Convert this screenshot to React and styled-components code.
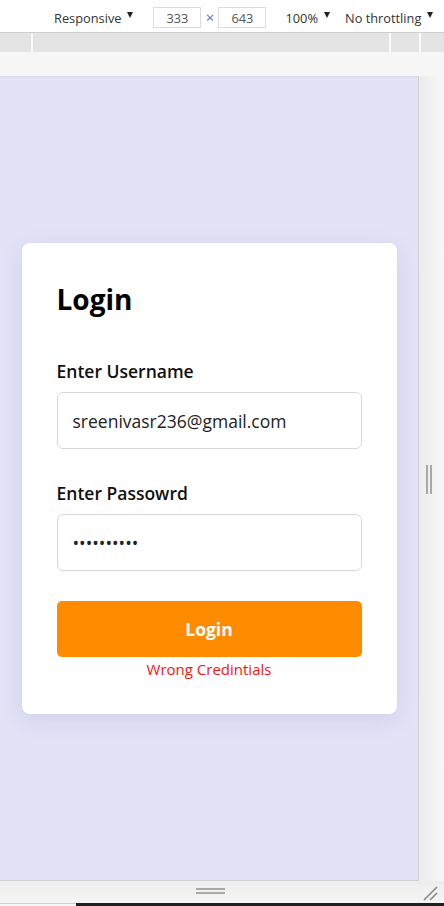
import React from "react";
import styled, { createGlobalStyle } from "styled-components";

const GlobalStyle = createGlobalStyle`
  html, body { margin: 0; padding: 0; background: #f3f3f3; }
  body { font-family: "Open Sans", "Noto Sans", sans-serif; overflow: hidden; }
  * { box-sizing: border-box; }
`;

const Frame = styled.div`
  width: 444px;
  height: 906px;
  display: grid;
  grid-template-rows: 33px 19px 24px 1fr 22px 3px;
  background: #f3f3f3;
`;

const Toolbar = styled.div`
  display: flex;
  align-items: center;
  padding-left: 54px;
  padding-top: 3px;
  background: #ffffff;
  border-bottom: 1px solid #cfcfcf;
  font-size: 12.8px;
  color: #333;
  white-space: nowrap;
`;

const Dropdown = styled.span`
  display: inline-flex;
  align-items: center;
  gap: 6px;
  margin-right: ${(p) => p.$gap || 0}px;
  &::after {
    content: "";
    border-left: 3.5px solid transparent;
    border-right: 3.5px solid transparent;
    border-top: 6px solid #222;
    margin-top: -5px;
  }
`;

const SizeBox = styled.span`
  width: 48px;
  height: 21px;
  border: 1px solid #dcdcdc;
  display: inline-flex;
  align-items: center;
  justify-content: center;
  color: #555;
  font-size: 12.8px;
`;

const Times = styled.span`
  width: 17px;
  text-align: center;
  color: #4a78c0;
  font-size: 15px;
  line-height: 1;
`;

const Spacer = styled.span`
  width: ${(p) => p.$w}px;
`;

const Ruler = styled.div`
  background: #e4e4e4;
  display: grid;
  grid-template-columns: 31px 2px 356px 2px 28px 2px 1fr;
`;

const RulerTick = styled.div`
  background: #fafafa;
`;

const Gap = styled.div`
  background: #f6f6f6;
`;

const Middle = styled.div`
  display: flex;
  min-height: 0;
`;

const Viewport = styled.div`
  width: 419px;
  background: #e2e3f6;
  border-top: 1px solid #d9d9e6;
  border-right: 1px solid #cfcfd6;
  border-bottom: 1px solid #cfcfd6;
  display: flex;
  align-items: center;
  justify-content: center;
`;

const SideStrip = styled.div`
  flex: 1;
  background: linear-gradient(to right, #ececec, #f3f3f3 60%, #f7f7f7);
  display: flex;
  align-items: center;
  padding-left: 7px;
  padding-top: 2px;
  gap: 2px;
`;

const VBar = styled.span`
  width: 2px;
  height: 29px;
  background: #a9a9a9;
`;

const BottomBar = styled.div`
  background: linear-gradient(to bottom, #ededed, #f5f5f5);
  display: grid;
  grid-template-columns: 419px 1fr;
  align-items: center;
`;

const HGrip = styled.span`
  justify-self: center;
  display: flex;
  flex-direction: column;
  gap: 2px;
  margin-left: 2px;
  margin-top: -2px;
  & > span {
    width: 29px;
    height: 2px;
    background: #a9a9a9;
  }
`;

const Corner = styled.svg`
  justify-self: end;
  margin-right: 6px;
  margin-top: 2px;
`;

const StatusBar = styled.div`
  display: grid;
  grid-template-columns: 76px 1fr;
`;

const StatusLeft = styled.div`
  background: #f7f7f7;
  border-top: 1px solid #cfcfcf;
`;

const StatusRight = styled.div`
  background: #1e1e1e;
`;

const Card = styled.form`
  width: 375px;
  background: #ffffff;
  border-radius: 8px;
  box-shadow: 0 6px 22px rgba(80, 80, 140, 0.12);
  padding: 37px 35px 35px;
  display: flex;
  flex-direction: column;
`;

const Title = styled.h1`
  margin: 0 0 41px;
  font-size: 28px;
  line-height: 38px;
  font-weight: 700;
  color: #000;
`;

const Label = styled.label`
  font-size: 17.5px;
  line-height: 24px;
  font-weight: 600;
  color: #111;
  margin-bottom: 9px;
`;

const Input = styled.input`
  height: 57px;
  width: 100%;
  border: 1px solid #d8d8d8;
  border-radius: 6px;
  padding: 0 15px;
  font-family: "Open Sans", sans-serif;
  font-size: 17.5px;
  color: #222;
  outline: none;
  margin-bottom: ${(p) => p.$mb}px;
  background: #fff;
`;

const Button = styled.button`
  height: 56px;
  width: 100%;
  border: none;
  border-radius: 5px;
  background: #ff8c00;
  color: #fff;
  font-family: "Open Sans", sans-serif;
  font-size: 17.5px;
  font-weight: 700;
  cursor: pointer;
`;

const ErrorText = styled.p`
  margin: 2px 0 0;
  text-align: center;
  font-size: 15px;
  line-height: 20px;
  color: #ff1010;
`;

export default function App() {
  return (
    <>
      <GlobalStyle />
      <Frame>
        <Toolbar>
          <Dropdown $gap={20}>Responsive</Dropdown>
          <SizeBox>333</SizeBox>
          <Times>×</Times>
          <SizeBox>643</SizeBox>
          <Spacer $w={19} />
          <Dropdown $gap={15}>100%</Dropdown>
          <Dropdown>No throttling</Dropdown>
        </Toolbar>
        <Ruler>
          <div />
          <RulerTick />
          <div />
          <RulerTick />
          <div />
          <RulerTick />
          <div />
        </Ruler>
        <Gap />
        <Middle>
          <Viewport>
            <Card onSubmit={(e) => e.preventDefault()}>
              <Title>Login</Title>
              <Label htmlFor="username">Enter Username</Label>
              <Input id="username" type="text" defaultValue="sreenivasr236@gmail.com" $mb={32} />
              <Label htmlFor="password">Enter Passowrd</Label>
              <Input id="password" type="password" defaultValue="1234567890" $mb={30} />
              <Button type="submit">Login</Button>
              <ErrorText>Wrong Credintials</ErrorText>
            </Card>
          </Viewport>
          <SideStrip>
            <VBar />
            <VBar />
          </SideStrip>
        </Middle>
        <BottomBar>
          <HGrip>
            <span />
            <span />
          </HGrip>
          <Corner width="16" height="16" viewBox="0 0 16 16">
            <path d="M2 15 L15 2 M8 15 L15 8" stroke="#8a8a8a" strokeWidth="1.6" fill="none" />
          </Corner>
        </BottomBar>
        <StatusBar>
          <StatusLeft />
          <StatusRight />
        </StatusBar>
      </Frame>
    </>
  );
}
